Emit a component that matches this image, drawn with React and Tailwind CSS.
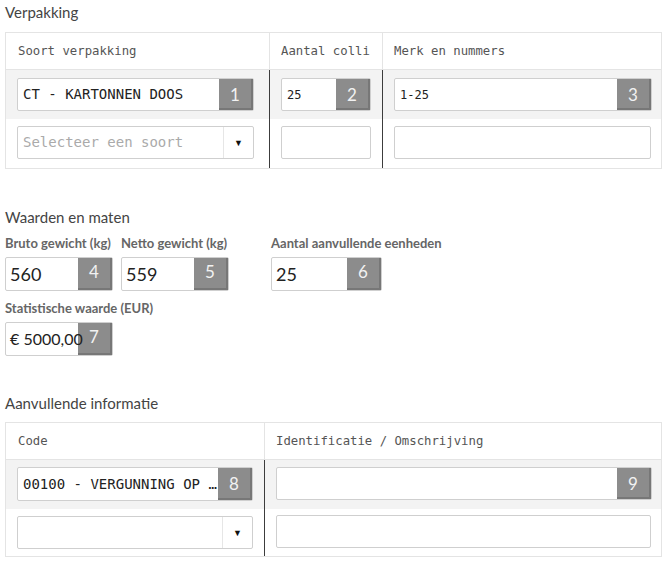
const mono = { fontFamily: '"DejaVu Sans Mono", "Liberation Mono", monospace' };

function Badge({ n, top = 'pt-[3px]' }) {
  return (
    <span
      className={`absolute right-0 top-0 bottom-0 w-[34px] bg-[#8c8c8c] border-r-2 border-b-2 border-[#777] text-[#f2f2f2] text-[17px] flex justify-center ${top}`}
      style={{ fontFamily: 'Lato, sans-serif' }}
    >
      {n}
    </span>
  );
}

function CellInput({ value, badge, size = 'text-[14px]' }) {
  return (
    <div className="relative h-[33px] bg-white border border-[#cfcfcf] rounded-[2px] flex items-center pl-[5px]">
      <span className={`${size} text-[#222] whitespace-nowrap overflow-hidden`} style={mono}>
        {value}
      </span>
      {badge && <Badge n={badge} />}
    </div>
  );
}

function CellSelect({ placeholder }) {
  return (
    <div className="h-[33px] bg-white border border-[#cfcfcf] rounded-[2px] flex">
      <span className="flex-1 flex items-center pl-[5px] text-[14px] text-[#aaa]" style={mono}>
        {placeholder}
      </span>
      <span className="w-[30px] border-l border-[#e6e6e6] flex items-center justify-center text-[9px] text-[#111]">
        ▼
      </span>
    </div>
  );
}

function SectionTitle({ children, className = '' }) {
  return (
    <h2 className={`text-[15px] text-[#444] ml-[5px] leading-[18px] ${className}`} style={{ fontFamily: 'Lato, sans-serif' }}>
      {children}
    </h2>
  );
}

function FieldLabel({ children }) {
  return (
    <div className="text-[13px] leading-[17px] font-bold text-[#666] mb-[5px] whitespace-nowrap" style={{ fontFamily: 'Lato, sans-serif' }}>
      {children}
    </div>
  );
}

function NumInput({ value, badge, width, size = 'text-[18px]' }) {
  return (
    <div className={`relative h-[34px] ${width} bg-white border border-[#cfcfcf] rounded-[2px] flex items-center pl-[4px]`}>
      <span className={`${size} text-[#222] relative z-10 whitespace-nowrap`} style={{ fontFamily: 'Lato, sans-serif' }}>
        {value}
      </span>
      <Badge n={badge} top="pt-[1px]" />
    </div>
  );
}

export default function App() {
  return (
    <div className="w-[670px] h-[575px] bg-white pt-[3px]">
      <SectionTitle>Verpakking</SectionTitle>

      {/* Verpakking table */}
      <div className="ml-[5px] mt-[11px] w-[657px] border border-[#e4e4e4]">
        <div className="flex h-[37px] border-b border-[#e4e4e4] text-[12.3px] text-[#555]" style={mono}>
          <div className="w-[263px] pl-[12px] flex items-center">Soort verpakking</div>
          <div className="w-[113px] pl-[11px] flex items-center border-l border-[#e4e4e4]">Aantal colli</div>
          <div className="flex-1 pl-[11px] flex items-center border-l border-[#e4e4e4]">Merk en nummers</div>
        </div>
        <div className="flex">
          <div className="w-[263px]">
            <div className="h-[49px] bg-[#f3f3f3] pl-[11px] pr-[15px] pt-[8px]">
              <CellInput value="CT - KARTONNEN DOOS" badge="1" />
            </div>
            <div className="h-[49px] pl-[11px] pr-[15px] pt-[7px]">
              <CellSelect placeholder="Selecteer een soort" />
            </div>
          </div>
          <div className="w-[113px] border-l border-[#3c3c3c]">
            <div className="h-[49px] bg-[#f3f3f3] pl-[11px] pr-[11px] pt-[8px]">
              <CellInput value="25" badge="2" size="text-[12px]" />
            </div>
            <div className="h-[49px] pl-[11px] pr-[11px] pt-[7px]">
              <CellInput value="" />
            </div>
          </div>
          <div className="flex-1 border-l border-[#3c3c3c]">
            <div className="h-[49px] bg-[#f3f3f3] pl-[11px] pr-[9px] pt-[8px]">
              <CellInput value="1-25" badge="3" size="text-[12px]" />
            </div>
            <div className="h-[49px] pl-[11px] pr-[10px] pt-[7px]">
              <CellInput value="" />
            </div>
          </div>
        </div>
      </div>

      <SectionTitle className="mt-[39px]">Waarden en maten</SectionTitle>

      <div className="ml-[5px] mt-[9px] flex">
        <div className="w-[116px]">
          <FieldLabel>Bruto gewicht (kg)</FieldLabel>
          <NumInput value="560" badge="4" width="w-[108px]" />
        </div>
        <div className="w-[150px]">
          <FieldLabel>Netto gewicht (kg)</FieldLabel>
          <NumInput value="559" badge="5" width="w-[108px]" />
        </div>
        <div>
          <FieldLabel>Aantal aanvullende eenheden</FieldLabel>
          <NumInput value="25" badge="6" width="w-[111px]" />
        </div>
      </div>

      <div className="ml-[5px] mt-[9px]">
        <FieldLabel>Statistische waarde (EUR)</FieldLabel>
        <NumInput value="€ 5000,00" badge="7" width="w-[108px]" size="text-[16px]" />
      </div>

      <SectionTitle className="mt-[38px]">Aanvullende informatie</SectionTitle>

      {/* Aanvullende informatie table */}
      <div className="ml-[5px] mt-[10px] w-[657px] border border-[#e4e4e4]">
        <div className="flex h-[37px] border-b border-[#e4e4e4] text-[12.3px] text-[#555]" style={mono}>
          <div className="w-[258px] pl-[12px] flex items-center">Code</div>
          <div className="flex-1 pl-[11px] flex items-center border-l border-[#e4e4e4]">Identificatie / Omschrijving</div>
        </div>
        <div className="flex">
          <div className="w-[258px]">
            <div className="h-[49px] bg-[#f3f3f3] pl-[11px] pr-[11px] pt-[7px]">
              <div className="relative h-[34px] bg-white border border-[#cfcfcf] rounded-[2px] flex items-center pl-[5px] pr-[33px]">
                <span className="text-[14px] text-[#222] whitespace-nowrap overflow-hidden text-ellipsis" style={mono}>
                  00100 - VERGUNNING OP UITVOER
                </span>
                <Badge n="8" />
              </div>
            </div>
            <div className="h-[47px] pl-[11px] pr-[11px] pt-[7px]">
              <CellSelect placeholder="" />
            </div>
          </div>
          <div className="flex-1 border-l border-[#3c3c3c]">
            <div className="h-[49px] bg-[#f3f3f3] pl-[11px] pr-[9px] pt-[7px]">
              <CellInput value="" badge="9" />
            </div>
            <div className="h-[47px] pl-[11px] pr-[10px] pt-[6px]">
              <CellInput value="" />
            </div>
          </div>
        </div>
      </div>
    </div>
  );
}
